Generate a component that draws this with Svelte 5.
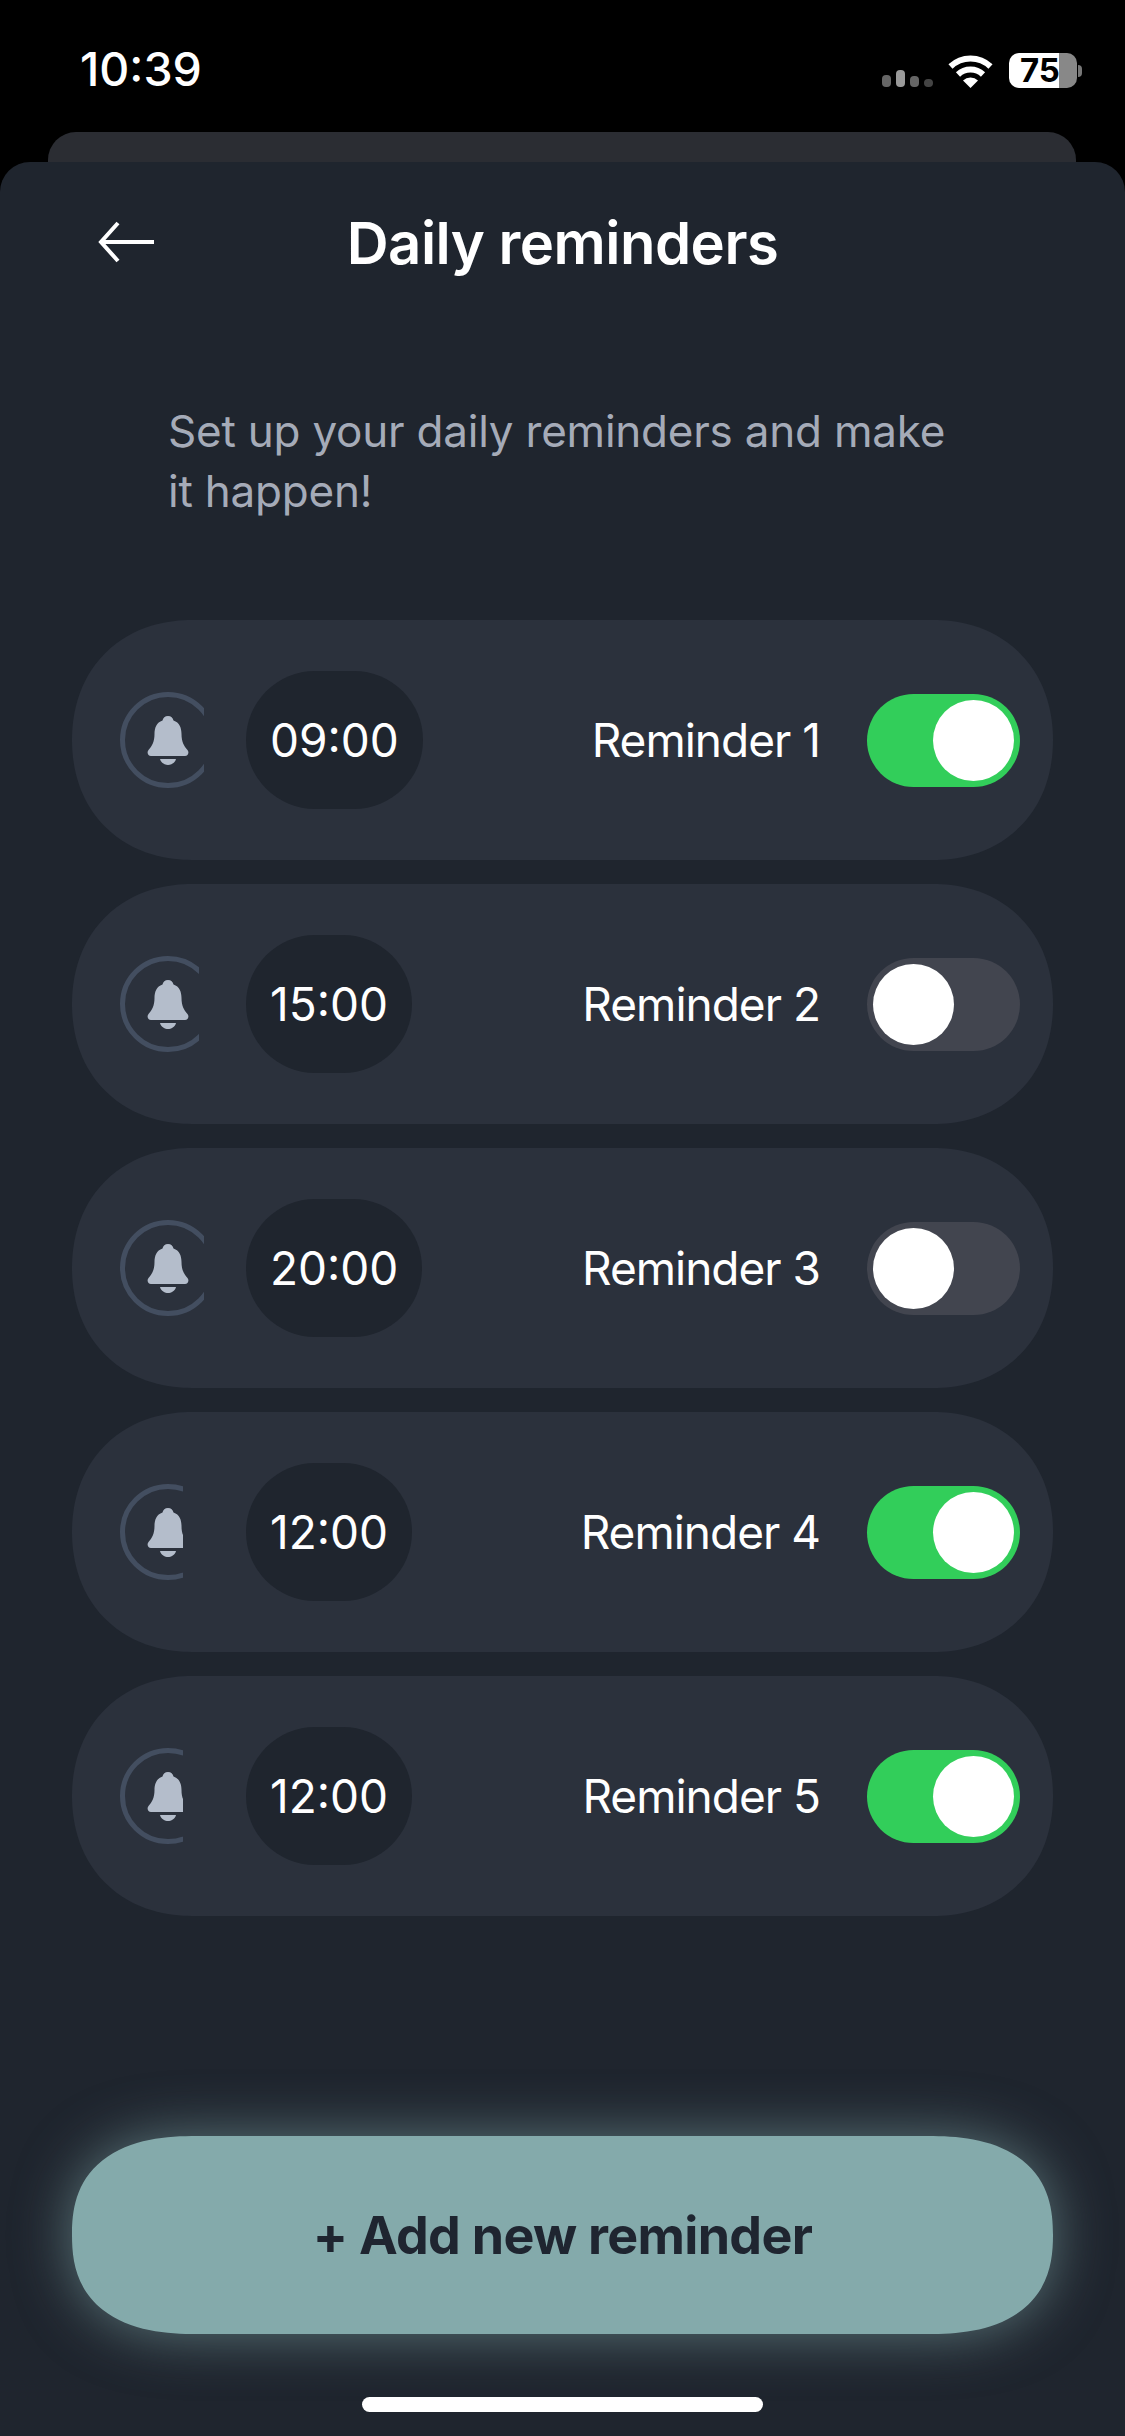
<script lang="ts">
  interface Reminder {
    time: string;
    label: string;
    on: boolean;
    clip: number;
  }

  let reminders = $state<Reminder[]>([
    { time: "09:00", label: "Reminder 1", on: true, clip: 84 },
    { time: "15:00", label: "Reminder 2", on: false, clip: 79 },
    { time: "20:00", label: "Reminder 3", on: false, clip: 84 },
    { time: "12:00", label: "Reminder 4", on: true, clip: 63 },
    { time: "12:00", label: "Reminder 5", on: true, clip: 63 },
  ]);
</script>

<div class="phone">
  <header class="status">
    <span class="clock">10:39</span>
    <div class="status-icons">
      <div class="signal">
        <i class="b1"></i><i class="b2"></i><i class="b3"></i><i class="b4"></i>
      </div>
      <svg class="wifi" width="45" height="34" viewBox="0 0 45 34" aria-hidden="true">
        <path d="M2.5 12.5A29 29 0 0 1 42.5 12.5" fill="none" stroke="#fff" stroke-width="6" />
        <path d="M10 20.500A18 18 0 0 1 35 20.500" fill="none" stroke="#fff" stroke-width="6" />
        <path d="M15 26.500A11 11 0 0 1 30 26.500L22.500 34Z" fill="#fff" />
      </svg>
      <div class="battery">
        <div class="cell"><span>75</span></div>
        <i class="cap"></i>
      </div>
    </div>
  </header>

  <div class="sheet-behind"></div>

  <main class="sheet">
    <div class="topbar">
      <button type="button" class="back" aria-label="Back">
        <svg width="58" height="42" viewBox="0 0 58 42" aria-hidden="true">
          <path d="M56 21H3M20 2 3 21l17 19" fill="none" stroke="#fff" stroke-width="4" />
        </svg>
      </button>
      <h1>Daily reminders</h1>
    </div>

    <p class="intro">Set up your daily reminders and make it happen!</p>

    <ul class="list">
      {#each reminders as r}
        <li class="row">
          <div class="bell-slot">
            <div class="bell-clip" style={`width:${r.clip}px`}>
              <div class="ring">
                <svg width="42" height="49" viewBox="0 0 42 49" aria-hidden="true">
                  <path
                    d="M21 0c-3 0-5 2-5.500 4.500C9.500 6.500 7.500 12 7.500 18c0 8-2.500 12-6 16-2 2.500-.5 6 2.500 6h34c3 0 4.500-3.500 2.500-6-3.500-4-6-8-6-16 0-6-2-11.500-8-13.500C26 2 24 0 21 0Z"
                    fill="#b4bdcb"
                  />
                  <path d="M13 43h16c-1 4-5 6-8 6s-7-2-8-6Z" fill="#b4bdcb" />
                </svg>
              </div>
            </div>
          </div>
          <div class="time">{r.time}</div>
          <span class="label">{r.label}</span>
          <button
            type="button"
            class="toggle"
            class:on={r.on}
            aria-label={r.label}
            onclick={() => (r.on = !r.on)}
          >
            <i></i>
          </button>
        </li>
      {/each}
    </ul>

    <div class="footer">
      <button type="button" class="add">+ Add new reminder</button>
      <div class="home"></div>
    </div>
  </main>
</div>

<style>
  :global(body) {
    background: #000;
  }

  .phone {
    width: 1125px;
    height: 2436px;
    display: flex;
    flex-direction: column;
    background: #000;
    font-family: Inter, "Liberation Sans", sans-serif;
    overflow: hidden;
  }

  .status {
    height: 132px;
    display: flex;
    justify-content: space-between;
    padding: 48px 43px 0 80px;
    box-sizing: border-box;
  }

  .clock {
    color: #fff;
    font-size: 46.5px;
    font-weight: 500;
    line-height: 42px;
    height: 42px;
  }

  .status-icons {
    display: flex;
    align-items: flex-end;
    height: 38px;
    margin-top: 3px;
  }

  .signal {
    display: flex;
    align-items: flex-end;
    gap: 5px;
    margin-right: 15px;
    margin-bottom: 2px;
  }

  .signal i {
    width: 9px;
    border-radius: 4px;
  }

  .b1 {
    height: 12px;
    background: #666;
  }

  .b2 {
    height: 17px;
    background: #999;
  }

  .b3 {
    height: 11px;
    background: #666;
  }

  .b4 {
    height: 8px;
    background: #444;
  }

  .wifi {
    margin-right: 16px;
    margin-bottom: 1px;
  }

  .battery {
    display: flex;
    align-items: center;
  }

  .cell {
    width: 68px;
    height: 35px;
    margin-bottom: 1px;
    border-radius: 10px;
    background: linear-gradient(90deg, #fff 50px, #888 50px);
    color: #000;
    font-size: 33px;
    font-weight: 700;
    line-height: 35px;
    padding-left: 11px;
    box-sizing: border-box;
  }

  .cap {
    width: 4px;
    height: 12px;
    margin-left: 1px;
    background: #777;
    border-radius: 0 6px 6px 0;
  }

  .sheet-behind {
    height: 30px;
    margin: 0 49px 0 48px;
    background: #2b2d33;
    border-radius: 28px 28px 0 0;
  }

  .sheet {
    flex: 1;
    display: flex;
    flex-direction: column;
    background: #1f252e;
    border-radius: 30px 30px 0 0;
    min-height: 0;
  }

  .topbar {
    position: relative;
    display: flex;
    justify-content: center;
    padding-top: 48px;
    height: 96px;
  }

  .back {
    position: absolute;
    left: 98px;
    top: 59px;
    padding: 0;
    border: none;
    background: transparent;
    line-height: 0;
  }

  h1 {
    margin: 0;
    color: #fff;
    font-size: 58px;
    font-weight: 600;
    line-height: 66px;
    letter-spacing: -0.5px;
  }

  .intro {
    margin: 95px 0 0;
    padding: 0 168px;
    color: #a5abb8;
    font-size: 44px;
    letter-spacing: -0.22px;
    line-height: 60px;
  }

  .list {
    list-style: none;
    margin: 99px 0 0;
    padding: 0 72px;
    display: flex;
    flex-direction: column;
    gap: 24px;
  }

  .row {
    height: 240px;
    display: flex;
    align-items: center;
    padding: 0 33px 0 48px;
    background: #2b313c;
    border-radius: 120px;
    corner-shape: superellipse(1.1);
  }

  .bell-slot {
    width: 126px;
    flex: none;
  }

  .bell-clip {
    overflow: hidden;
    height: 96px;
  }

  .ring {
    width: 96px;
    height: 96px;
    box-sizing: border-box;
    border: 5px solid #434e60;
    border-radius: 50%;
    display: flex;
    align-items: center;
    justify-content: center;
  }

  .time {
    height: 138px;
    display: flex;
    align-items: center;
    padding: 0 24px;
    background: #1f252e;
    border-radius: 69px;
    color: #fff;
    font-size: 46px;
  }

  .label {
    margin-left: auto;
    margin-right: 47px;
    color: #fff;
    font-size: 46px;
    letter-spacing: -1px;
  }

  .toggle {
    width: 153px;
    height: 93px;
    padding: 6px;
    border: none;
    border-radius: 47px;
    background: #42454f;
    display: flex;
    justify-content: flex-start;
    box-sizing: border-box;
  }

  .toggle.on {
    background: #32ce5a;
    justify-content: flex-end;
  }

  .toggle i {
    width: 81px;
    height: 81px;
    border-radius: 50%;
    background: #fff;
  }

  .footer {
    margin-top: auto;
    padding: 0 72px 24px;
    display: flex;
    flex-direction: column;
    align-items: center;
  }

  .add {
    width: 100%;
    height: 198px;
    border: none;
    border-radius: 125px / 99px;
    corner-shape: superellipse(1.3);
    background: #84aaab;
    box-shadow: 0 0 56px rgba(132, 170, 171, 0.6);
    color: #1f2530;
    font-family: inherit;
    font-size: 52px;
    font-weight: 700;
    letter-spacing: -0.7px;
  }

  .home {
    width: 401px;
    height: 15px;
    margin-top: 63px;
    border-radius: 8px;
    background: #fff;
  }
</style>
